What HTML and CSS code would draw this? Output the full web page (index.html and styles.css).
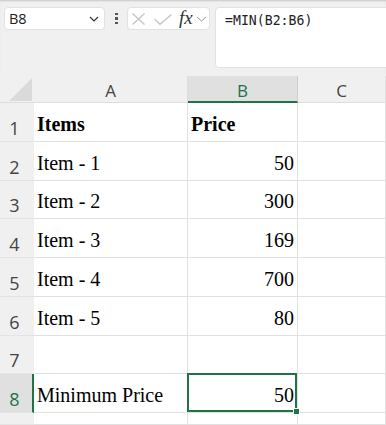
FILE: index.html
```html
<!DOCTYPE html>
<html>
<head>
<meta charset="utf-8">
<link rel="stylesheet" href="styles.css">
</head>
<body>
<div class="formula-bar">
  <div class="name-box">
    <span class="name-text">B8</span>
    <svg class="chev" width="10" height="6" viewBox="0 0 10 6"><polyline points="1,1 5,5 9,1" fill="none" stroke="#333" stroke-width="1.2"/></svg>
  </div>
  <div class="dots"><span></span><span></span><span></span></div>
  <div class="fx-box">
    <svg class="ico-x" width="13" height="12" viewBox="0 0 13 12"><path d="M0.5 0.5 L12.5 11.5 M12.5 0.5 L0.5 11.5" stroke="#c4c4c4" stroke-width="1.3" fill="none"/></svg>
    <svg class="ico-check" width="18" height="11" viewBox="0 0 18 11"><polyline points="0.5,5 6,10.3 17.5,0.5" stroke="#c4c4c4" stroke-width="1.3" fill="none"/></svg>
    <span class="fx">fx</span>
    <svg class="chev-small" width="11" height="6" viewBox="0 0 11 6"><polyline points="1,1 5.5,5 10,1" fill="none" stroke="#9a9a9a" stroke-width="1"/></svg>
  </div>
  <div class="formula">=MIN(B2:B6)</div>
</div>
<div class="sheet">
  <div class="corner"><svg width="24" height="24" viewBox="0 0 24 24"><polygon points="0,24 24,24 24,0" fill="#dadada"/></svg></div>
  <div class="colh">A</div>
  <div class="colh sel">B</div>
  <div class="colh">C</div>

  <div class="rowh">1</div>
  <div class="cell bold">Items</div>
  <div class="cell bold">Price</div>
  <div class="cell"></div>

  <div class="rowh">2</div>
  <div class="cell">Item - 1</div>
  <div class="cell num">50</div>
  <div class="cell"></div>

  <div class="rowh">3</div>
  <div class="cell">Item - 2</div>
  <div class="cell num">300</div>
  <div class="cell"></div>

  <div class="rowh">4</div>
  <div class="cell">Item - 3</div>
  <div class="cell num">169</div>
  <div class="cell"></div>

  <div class="rowh">5</div>
  <div class="cell">Item - 4</div>
  <div class="cell num">700</div>
  <div class="cell"></div>

  <div class="rowh">6</div>
  <div class="cell">Item - 5</div>
  <div class="cell num">80</div>
  <div class="cell"></div>

  <div class="rowh">7</div>
  <div class="cell"></div>
  <div class="cell"></div>
  <div class="cell"></div>

  <div class="rowh sel">8</div>
  <div class="cell">Minimum Price</div>
  <div class="cell num active">50<span class="handle"></span></div>
  <div class="cell"></div>

  <div class="rowh"></div>
  <div class="cell"></div>
  <div class="cell"></div>
  <div class="cell"></div>
</div>
</body>
</html>
```
FILE: styles.css
```css
html, body {
  margin: 0;
  padding: 0;
  background: #f0f0f0;
  overflow: hidden;
}
body {
  width: 386px;
  height: 425px;
}
.formula-bar {
  height: 76px;
  box-sizing: border-box;
  display: flex;
  align-items: flex-start;
  padding: 7px 0 0 4px;
  background: #f0f0f0;
  box-shadow: inset 0 2px 2px -1px rgba(0,0,0,0.18);
  overflow: hidden;
}
.name-box {
  width: 101px;
  height: 23px;
  box-sizing: border-box;
  background: #fff;
  border: 1px solid #e2e2e2;
  border-radius: 4px;
  display: flex;
  align-items: center;
  justify-content: space-between;
  padding: 0 5px 0 4px;
}
.name-text {
  font-family: "Open Sans", sans-serif;
  font-size: 14.5px;
  color: #222;
}
.chev { margin-top: 1px; }
.dots {
  margin-left: 10px;
  width: 3px;
  height: 23px;
  display: flex;
  flex-direction: column;
  justify-content: center;
  gap: 2px;
}
.dots span {
  display: block;
  width: 2.5px;
  height: 2.5px;
  background: #555;
}
.fx-box {
  margin-left: 9px;
  width: 83px;
  height: 23px;
  box-sizing: border-box;
  background: #fff;
  border: 1px solid #e2e2e2;
  border-radius: 4px;
  display: flex;
  align-items: center;
  padding-left: 4px;
}
.ico-check { margin-left: 9px; margin-top: 1px; }
.fx {
  margin-left: 7px;
  font-family: "Liberation Serif", serif;
  font-style: italic;
  font-size: 19px;
  color: #333;
  line-height: 20px;
  margin-top: -2px;
}
.chev-small { margin-left: 3px; }
.formula {
  margin-left: 5px;
  margin-right: -10px;
  flex: 1;
  height: 61px;
  box-sizing: border-box;
  background: #fff;
  border: 1px solid #e2e2e2;
  border-radius: 4px;
  padding: 4px 0 0 9px;
  font-family: "DejaVu Sans Mono", monospace;
  font-size: 13.2px;
  line-height: 18px;
  color: #222;
}
.sheet {
  display: grid;
  grid-template-columns: 34px 154px 110px 1fr;
  grid-template-rows: 27px repeat(8, 38.75px) 1fr;
  height: 349px;
  background: #fff;
}
.corner {
  background: #f0f0f0;
  border-bottom: 1px solid #dedede;
  display: flex;
  align-items: flex-end;
  justify-content: flex-end;
  padding: 0 2px 1px 0;
}
.corner svg { width: 23px; height: 23px; }
.colh {
  background: #f0f0f0;
  border-bottom: 1px solid #dedede;
  border-right: 1px solid #dedede;
  display: flex;
  align-items: flex-end;
  justify-content: center;
  font-family: "Open Sans", sans-serif;
  font-size: 17px;
  line-height: 20px;
  color: #444;
  padding-bottom: 1px;
}
.colh.sel {
  background: #e0e0e0;
  color: #217346;
  border-bottom: 2px solid #217346;
  border-right-color: #cfcfcf;
  padding-bottom: 0;
}
.rowh {
  background: #f0f0f0;
  border-bottom: 1px solid #e4e4e4;
  display: flex;
  align-items: flex-end;
  justify-content: center;
  padding: 0 5px 3px 0;
  font-family: "Open Sans", sans-serif;
  font-size: 18px;
  line-height: 20px;
  color: #444;
}
.rowh.sel {
  background: #e0e0e0;
  color: #217346;
  border-right: 2px solid #217346;
  padding-right: 3px;
}
.cell {
  border-bottom: 1px solid #e1e1e1;
  border-right: 1px solid #e1e1e1;
  display: flex;
  align-items: flex-end;
  padding: 0 3px 6px 3px;
  font-family: "Liberation Serif", serif;
  font-size: 20px;
  line-height: 22px;
  color: #000;
  white-space: nowrap;
  min-width: 0;
}
.bold { font-weight: bold; }
.num { justify-content: flex-end; }
.active { position: relative; }
.active::after {
  content: "";
  position: absolute;
  left: -1px;
  top: -1px;
  right: 0;
  bottom: 0;
  border: 2px solid #217346;
}
.handle {
  position: absolute;
  right: -3px;
  bottom: -3px;
  width: 5px;
  height: 5px;
  background: #217346;
  border: 1px solid #fff;
  z-index: 2;
}
```
